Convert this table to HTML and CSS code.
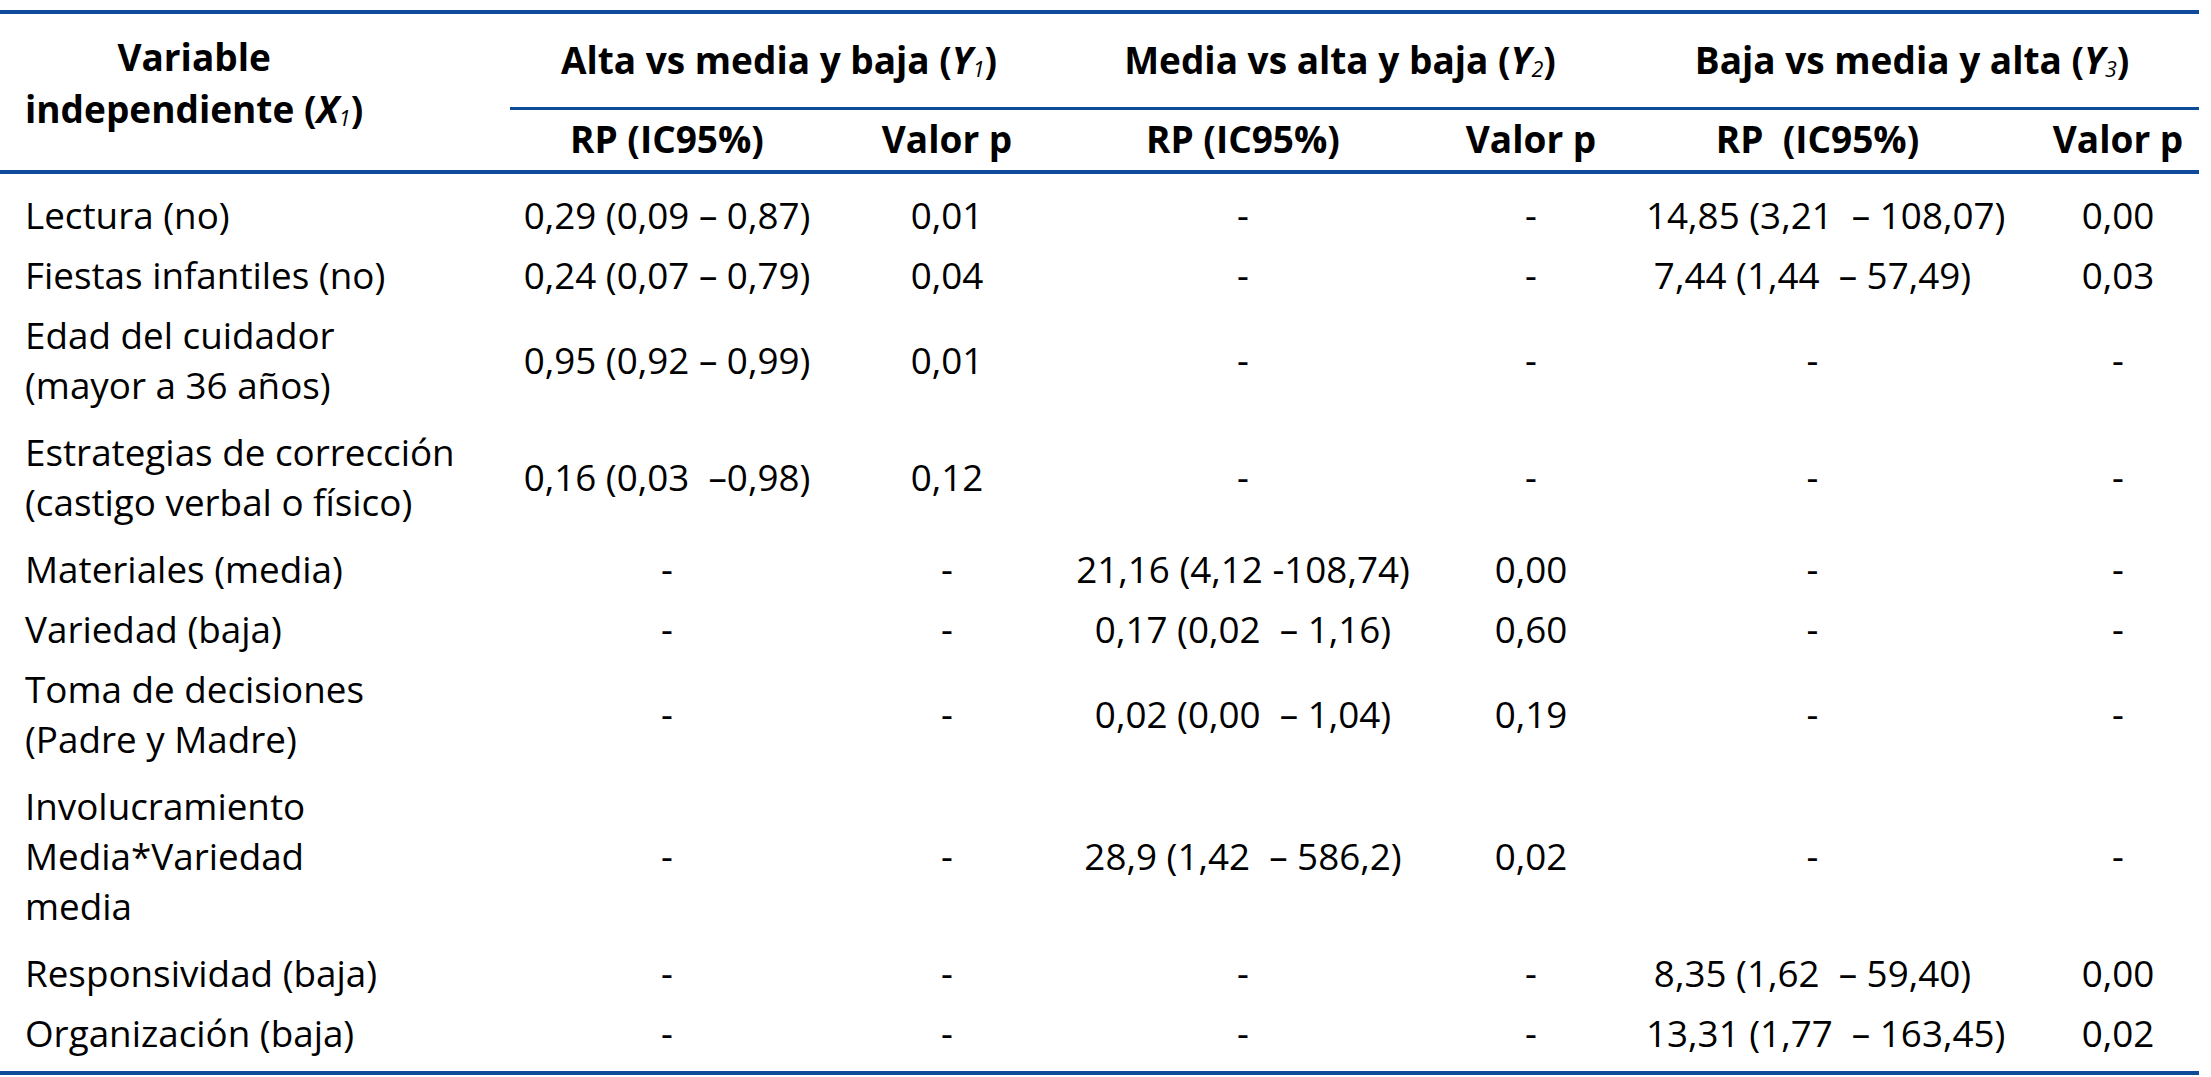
FILE: index.html
```html
<!DOCTYPE html>
<html lang="es">
<head>
<meta charset="utf-8">
<title>Tabla</title>
<link rel="stylesheet" href="styles.css">
</head>
<body>
<table class="tbl">
  <colgroup>
    <col class="c1"><col class="c2"><col class="c3"><col class="c4"><col class="c5"><col class="c6"><col class="c7">
  </colgroup>
  <thead>
    <tr class="hrow1">
      <th rowspan="2" class="hvar"><span class="hvar-in">Variable<br>independiente (<i>X<sub class="s">1</sub></i>)</span></th>
      <th colspan="2" class="grp g1">Alta vs media y baja (<i>Y<sub class="s">1</sub></i>)</th>
      <th colspan="2" class="grp g2">Media vs alta y baja (<i>Y<sub class="s">2</sub></i>)</th>
      <th colspan="2" class="grp g3">Baja vs media y alta (<i>Y<sub class="s">3</sub></i>)</th>
    </tr>
    <tr class="hrow2">
      <th class="sub">RP (IC95%)</th>
      <th class="sub">Valor p</th>
      <th class="sub">RP (IC95%)</th>
      <th class="sub">Valor p</th>
      <th class="sub">RP&nbsp; (IC95%)</th>
      <th class="sub">Valor p</th>
    </tr>
  </thead>
  <tbody>
    <tr class="first">
      <td class="lab">Lectura (no)</td>
      <td>0,29 (0,09 – 0,87)</td><td>0,01</td>
      <td>-</td><td>-</td>
      <td>14,85 (3,21&nbsp; – 108,07)</td><td>0,00</td>
    </tr>
    <tr>
      <td class="lab">Fiestas infantiles (no)</td>
      <td>0,24 (0,07 – 0,79)</td><td>0,04</td>
      <td>-</td><td>-</td>
      <td>7,44 (1,44&nbsp; – 57,49)</td><td>0,03</td>
    </tr>
    <tr class="multi">
      <td class="lab">Edad del cuidador<br>(mayor a 36 años)</td>
      <td>0,95 (0,92 – 0,99)</td><td>0,01</td>
      <td>-</td><td>-</td>
      <td>-</td><td>-</td>
    </tr>
    <tr class="multi">
      <td class="lab">Estrategias de corrección<br>(castigo verbal o físico)</td>
      <td>0,16 (0,03&nbsp; –0,98)</td><td>0,12</td>
      <td>-</td><td>-</td>
      <td>-</td><td>-</td>
    </tr>
    <tr>
      <td class="lab">Materiales (media)</td>
      <td>-</td><td>-</td>
      <td>21,16 (4,12 -108,74)</td><td>0,00</td>
      <td>-</td><td>-</td>
    </tr>
    <tr>
      <td class="lab">Variedad (baja)</td>
      <td>-</td><td>-</td>
      <td>0,17 (0,02&nbsp; – 1,16)</td><td>0,60</td>
      <td>-</td><td>-</td>
    </tr>
    <tr class="multi">
      <td class="lab">Toma de decisiones<br>(Padre y Madre)</td>
      <td>-</td><td>-</td>
      <td>0,02 (0,00&nbsp; – 1,04)</td><td>0,19</td>
      <td>-</td><td>-</td>
    </tr>
    <tr class="multi">
      <td class="lab">Involucramiento<br>Media*Variedad<br>media</td>
      <td>-</td><td>-</td>
      <td>28,9 (1,42&nbsp; – 586,2)</td><td>0,02</td>
      <td>-</td><td>-</td>
    </tr>
    <tr>
      <td class="lab">Responsividad (baja)</td>
      <td>-</td><td>-</td>
      <td>-</td><td>-</td>
      <td>8,35 (1,62&nbsp; – 59,40)</td><td>0,00</td>
    </tr>
    <tr class="last">
      <td class="lab">Organización (baja)</td>
      <td>-</td><td>-</td>
      <td>-</td><td>-</td>
      <td>13,31 (1,77&nbsp; – 163,45)</td><td>0,02</td>
    </tr>
  </tbody>
</table>
</body>
</html>
```

FILE: styles.css
```css
html, body {
  margin: 0;
  padding: 0;
  background: #ffffff;
}

body {
  font-family: "Open Sans", "Noto Sans", "Liberation Sans", sans-serif;
  color: #000000;
}

.tbl {
  border-collapse: separate;
  border-spacing: 0;
  table-layout: fixed;
  width: 2199px;
  margin-top: 10px;
  border-top: 4px solid #0e4b9b;
  border-bottom: 4px solid #0e4b9b;
}

.c1 { width: 510px; }
.c2 { width: 314px; }
.c3 { width: 246px; }
.c4 { width: 346px; }
.c5 { width: 230px; }
.c6 { width: 391px; }
.c7 { width: 162px; }

th {
  font-size: 37px;
  font-weight: 700;
  line-height: 52px;
  vertical-align: top;
  white-space: nowrap;
  padding: 0;
}

th i {
  font-style: italic;
}

.s {
  font-size: 58%;
  font-weight: 400;
  vertical-align: -0.14em;
  line-height: 0;
}

.hvar {
  text-align: left;
  padding: 17px 0 0 25px;
  border-bottom: 4px solid #0e4b9b;
}

.hvar-in {
  display: inline-block;
  text-align: center;
}

.grp {
  text-align: center;
  padding-top: 20px;
  padding-bottom: 21px;
  border-bottom: 3px solid #0e4b9b;
}

.g1 { padding-right: 22px; }
.g2 { padding-right: 36px; }
.g3 { padding-right: 21px; }

.sub {
  text-align: center;
  padding-top: 3px;
  padding-bottom: 5px;
  border-bottom: 4px solid #0e4b9b;
}

.hrow2 th:nth-child(5) {
  padding-right: 48px;
}

td {
  font-size: 36.8px;
  font-weight: 400;
  line-height: 50px;
  text-align: center;
  vertical-align: middle;
  white-space: nowrap;
  padding: 5px 0;
}

td.lab {
  text-align: left;
  padding-left: 25px;
}

tbody td:nth-child(6) {
  padding-right: 58px;
}

tr.first td {
  padding-top: 16px;
}

tr.multi td {
  padding-bottom: 12px;
}

tr.last td {
  padding-bottom: 13px;
}
```
